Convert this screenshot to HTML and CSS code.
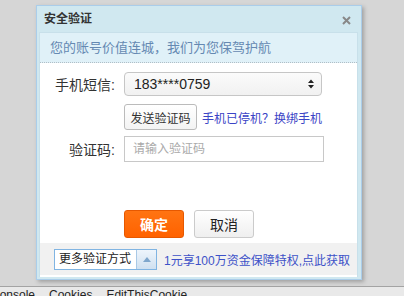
FILE: index.html
```html
<!DOCTYPE html>
<html lang="zh-CN">

<head>
  <meta charset="UTF-8">
  <meta name="viewport" content="width=device-width, initial-scale=1.0">
  <title>安全验证</title>
  <link rel="stylesheet" href="styles.css">
</head>

<body>

  <div class="stage">
    <div class="dialog">
      <div class="dialog-head">
        <span class="dialog-title">安全验证</span>
        <span class="close">
          <svg width="9" height="9" viewBox="0 0 9 9">
            <path d="M1 1 L8 8 M8 1 L1 8" stroke="#888" stroke-width="2" fill="none" />
          </svg>
        </span>
      </div>

      <div class="panel">
        <div class="notice">您的账号价值连城，我们为您保驾护航</div>

        <div class="form">
          <div class="form-row">
            <label class="form-label">手机短信:</label>
            <div class="phone-select">
              <span>183****0759</span>
              <svg width="6" height="10" viewBox="0 0 6 10">
                <path d="M0 4 L3 0.5 L6 4 Z M0 6 L3 9.5 L6 6 Z" fill="#222" />
              </svg>
            </div>
          </div>

          <div class="form-row send-row">
            <span class="form-label"></span>
            <button class="send-btn">发送验证码</button>
            <a class="link" href="#">手机已停机？换绑手机</a>
          </div>

          <div class="form-row code-row">
            <label class="form-label" for="code">验证码:</label>
            <input type="text" id="code" class="code-input" placeholder="请输入验证码">
          </div>

          <div class="actions">
            <button class="btn btn-ok">确定</button>
            <button class="btn btn-cancel">取消</button>
          </div>
        </div>

        <div class="panel-foot">
          <div class="more-select">
            <span class="more-text">更多验证方式</span>
            <span class="more-arrow">
              <svg width="8" height="5" viewBox="0 0 8 5">
                <path d="M0 5 L4 0 L8 5 Z" fill="#7ea6cc" />
              </svg>
            </span>
          </div>
          <a class="link foot-link" href="#">1元享100万资金保障特权,点此获取</a>
        </div>
      </div>
    </div>
  </div>

  <div class="devbar">
    <span class="devtab first">Console</span>
    <span class="devtab">Cookies</span>
    <span class="devtab">EditThisCookie</span>
  </div>

</body>

</html>
```

FILE: styles.css
```css
body {
  margin: 0;
  padding: 0;
  width: 404px;
  height: 296px;
  overflow: hidden;
  background: #d6d6d6;
  font-family: "Liberation Sans", "Noto Sans CJK SC", sans-serif;
  color: #333;
}

.stage {
  height: 286px;
  padding: 5px 0 0 36px;
  box-sizing: border-box;
}

/* dialog frame */
.dialog {
  width: 326px;
  height: 275px;
  box-sizing: border-box;
  border: 1px solid #aacdea;
  background: #d0e8f0;
  padding: 0 3px 2px 2px;
  box-shadow: 2px 2px 4px rgba(0, 0, 0, 0.25);
  display: flex;
  flex-direction: column;
}

.dialog-head {
  height: 27px;
  display: flex;
  align-items: center;
  justify-content: space-between;
  padding: 0 7px 0 5px;
}

.dialog-title {
  font-size: 12px;
  font-weight: bold;
  color: #333;
  line-height: 14px;
}

.close {
  display: flex;
  margin-top: 2px;
}

.panel {
  flex: 1;
  background: #fff;
  border: 1px solid #c8e0ea;
  border-bottom: 0;
  padding-bottom: 2px;
  display: flex;
  flex-direction: column;
}

.notice {
  height: 29px;
  background: #e0f1f8;
  border-bottom: 1px dotted #b0bec6;
  padding-left: 10px;
  font-size: 13px;
  line-height: 29px;
  color: #6589b2;
}

/* form */
.form {
  flex: 1;
  padding-top: 9px;
}

.form-row {
  display: flex;
  align-items: center;
}

.form-label {
  width: 77px;
  flex: none;
  text-align: right;
  margin-right: 7px;
  padding-right: 2px;
  box-sizing: border-box;
  font-size: 14px;
  color: #333;
}

.phone-select {
  width: 198px;
  height: 24px;
  box-sizing: border-box;
  border: 1px solid #c6c6c6;
  border-radius: 4px;
  background: linear-gradient(#fbfbfb, #f1f1f1);
  display: flex;
  align-items: center;
  justify-content: space-between;
  padding: 0 7px 0 9px;
  font-size: 14px;
  color: #222;
}

.send-row {
  margin-top: 8px;
}

.send-btn {
  height: 26px;
  width: 73px;
  padding: 0;
  border: 1px solid #bbb;
  border-radius: 3px;
  background: linear-gradient(#fff, #f3f3f3);
  font-family: inherit;
  font-size: 12px;
  color: #333;
}

.link {
  font-size: 12px;
  color: #3b44c6;
  text-decoration: none;
}

.send-row .link {
  margin-left: 5px;
}

.code-row {
  margin-top: 6px;
}

.code-input {
  width: 200px;
  height: 26px;
  box-sizing: border-box;
  border: 1px solid #c8c8c8;
  padding: 0 8px;
  font-family: inherit;
  font-size: 12px;
  outline: none;
}

.code-input::placeholder {
  color: #aaa;
}

.actions {
  margin-top: 48px;
  padding-left: 84px;
  display: flex;
  gap: 10px;
}

.btn {
  width: 60px;
  height: 28px;
  border-radius: 3px;
  font-family: inherit;
  font-size: 14px;
  padding: 0;
  cursor: pointer;
}

.btn-ok {
  background: linear-gradient(#ff7412, #ff6200);
  border: 1px solid #e65800;
  color: #fff;
  font-weight: bold;
}

.btn-cancel {
  background: linear-gradient(#fff, #efefef);
  border: 1px solid #cbcbcb;
  color: #222;
}

/* footer */
.panel-foot {
  height: 32px;
  margin-top: 5px;
  background: #f1f1f1;
  display: flex;
  align-items: center;
  padding-left: 14px;
}

.more-select {
  width: 103px;
  height: 21px;
  box-sizing: border-box;
  border: 1px solid #80b4e2;
  background: #fff;
  display: flex;
}

.more-text {
  flex: 1;
  font-size: 12px;
  line-height: 19px;
  padding-left: 4px;
  color: #222;
}

.more-arrow {
  width: 19px;
  border-left: 1px solid #a9c9e6;
  background: linear-gradient(#eef5fc, #cfe0f0);
  display: flex;
  align-items: center;
  justify-content: center;
}

.foot-link {
  margin-left: 7px;
  color: #3d52c8;
}

/* devtools strip */
.devbar {
  height: 10px;
  border-top: 1px solid #a3a3a3;
  background: #e9e9e9;
  display: flex;
  gap: 14px;
  font-size: 12px;
  line-height: 14px;
  padding-top: 1px;
  color: #222;
  overflow: hidden;
}

.devtab.first {
  margin-left: -9px;
}
```
